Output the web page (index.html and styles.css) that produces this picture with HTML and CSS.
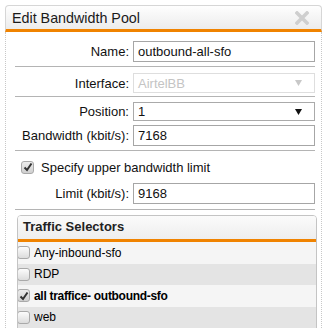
FILE: index.html
```html
<!DOCTYPE html>
<html lang="en">
<head>
  <meta charset="UTF-8">
  <title>Edit Bandwidth Pool</title>
  <link rel="stylesheet" href="styles.css">
</head>
<body>
  <div class="dialog">
    <div class="dlg-head">
      <span class="dlg-title">Edit Bandwidth Pool</span>
      <svg class="close" width="14" height="14" viewBox="0 0 14 14">
        <path d="M2 2 L12 12 M12 2 L2 12" stroke="#cfcfcf" stroke-width="3.6" stroke-linecap="square"/>
      </svg>
    </div>

    <div class="dlg-body">
      <div class="sect sect-name">
        <div class="row">
          <label class="lbl">Name:</label>
          <div class="field">outbound-all-sfo</div>
        </div>
      </div>

      <div class="sect sect-iface">
        <div class="row">
          <label class="lbl">Interface:</label>
          <div class="field select disabled">
            <span>AirtelBB</span>
            <svg class="arrow" width="7" height="6" viewBox="0 0 7 6"><path d="M0 0 H7 L3.5 6 Z" fill="#c8c8c8"/></svg>
          </div>
        </div>
      </div>

      <div class="sect sect-pos">
        <div class="row">
          <label class="lbl">Position:</label>
          <div class="field select short">
            <span>1</span>
            <svg class="arrow" width="7" height="6" viewBox="0 0 7 6"><path d="M0 0 H7 L3.5 6 Z" fill="#111"/></svg>
          </div>
        </div>
        <div class="row">
          <label class="lbl">Bandwidth (kbit/s):</label>
          <div class="field">7168</div>
        </div>
      </div>

      <div class="sect sect-limit">
        <div class="check-row">
          <span class="cb checked">
            <svg width="10" height="10" viewBox="0 0 10 10"><path d="M1.5 5.5 L4 8 L8.5 1.5" stroke="#333" stroke-width="2" fill="none"/></svg>
          </span>
          <span class="check-text">Specify upper bandwidth limit</span>
        </div>
        <div class="row">
          <label class="lbl">Limit (kbit/s):</label>
          <div class="field">9168</div>
        </div>
      </div>

      <div class="selectors">
        <div class="sel-head">Traffic Selectors</div>
        <ul class="sel-list">
          <li><span class="cb"></span>Any-inbound-sfo</li>
          <li><span class="cb"></span>RDP</li>
          <li class="on">
            <span class="cb checked">
              <svg width="10" height="10" viewBox="0 0 10 10"><path d="M1.5 5.5 L4 8 L8.5 1.5" stroke="#333" stroke-width="2" fill="none"/></svg>
            </span>all traffice- outbound-sfo
          </li>
          <li><span class="cb"></span>web</li>
        </ul>
      </div>
    </div>
  </div>
</body>
</html>
```

FILE: styles.css
```css
* {
  box-sizing: border-box;
}

body {
  margin: 0;
  background: #fff;
  font-family: "Liberation Sans", Arial, sans-serif;
  color: #111;
}

.dialog {
  margin: 5px 0 0 5px;
  width: 317px;
}

.dlg-head {
  height: 27px;
  display: flex;
  align-items: center;
  justify-content: space-between;
  padding: 0 12px 0 6px;
  background: linear-gradient(#fefefe, #ececec);
  border: 1px solid #d6d6d6;
  border-bottom: 3px solid #f08300;
  border-radius: 4px 4px 0 0;
}

.dlg-title {
  font-size: 14.3px;
  color: #1a1a1a;
  padding-top: 1px;
}

.close {
  display: block;
}

.dlg-body {
  border-left: 1px dotted #c8c8c8;
  border-right: 1px dotted #c8c8c8;
  padding: 0 6px 0 9px;
  height: 300px;
}

.sect {
  border-bottom: 1px solid #b4b4b4;
}

.sect-name {
  padding: 9px 0 4px;
}

.sect-iface {
  padding: 6px 0 3px;
}

.sect-pos {
  padding: 5px 0 4px;
}

.sect-limit {
  padding: 8px 0 5px;
}

.row {
  display: grid;
  grid-template-columns: 114px 182px;
  column-gap: 4px;
  align-items: center;
}

.row + .row {
  margin-top: 4px;
}

.lbl {
  text-align: right;
  font-size: 13px;
  color: #111;
}

.field {
  height: 21px;
  border: 1px solid #a6a6a6;
  padding: 0 4px;
  font-size: 13px;
  line-height: 19px;
  color: #111;
  background: #fff;
}

.select {
  display: flex;
  align-items: center;
  justify-content: space-between;
  padding-right: 12px;
  border-color: #aaa;
}

.select.short {
  height: 19px;
}

.disabled {
  height: 20px;
  border-color: #dedede;
  color: #c4c4c4;
}

.arrow {
  display: block;
}

.check-row {
  display: flex;
  align-items: center;
  height: 16px;
  padding-left: 6px;
  margin-bottom: 8px;
  font-size: 13px;
}

.check-text {
  margin-left: 7px;
}

.cb {
  display: inline-flex;
  align-items: center;
  justify-content: center;
  width: 13px;
  height: 13px;
  border: 1px solid #a9a9a9;
  border-radius: 3px;
  background: linear-gradient(#fcfcfc, #dcdcdc);
  flex: none;
}

.cb.checked {
  background: linear-gradient(#ececec, #cfcfcf);
}

.cb svg {
  display: block;
}

.selectors {
  margin: 5px -2px 0 2px;
  border: 1px solid #c4c4c4;
  border-radius: 4px 4px 0 0;
  overflow: hidden;
}

.sel-head {
  height: 26px;
  padding: 0 0 0 5px;
  background: linear-gradient(#fbfbfb, #eeeeee);
  border-bottom: 3px solid #f08300;
  font-size: 13px;
  font-weight: bold;
  line-height: 21px;
  color: #222;
}

.sel-list {
  list-style: none;
  margin: 0;
  padding: 0;
}

.sel-list li {
  display: flex;
  align-items: center;
  height: 21.5px;
  font-size: 12px;
  color: #000;
  background: #f5f5f5;
}

.sel-list li:nth-child(even) {
  background: #e4e4e4;
}

.sel-list li.on {
  font-weight: bold;
  letter-spacing: -0.3px;
}

.sel-list .cb {
  margin: 0 4px 0 -1px;
}
```
